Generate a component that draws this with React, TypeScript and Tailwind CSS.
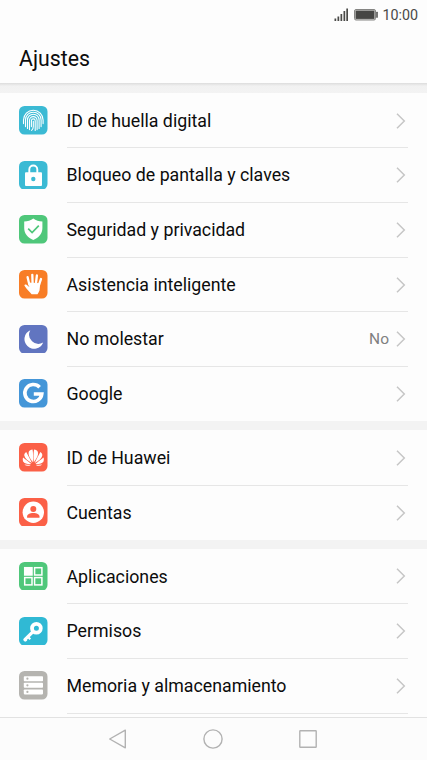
import React from 'react';

interface SettingItem {
  label: string;
  color: string;
  icon: React.ReactNode;
  value?: string;
}

const FingerprintIcon = () => (
  <g fill="none" stroke="white" strokeWidth="1.1" strokeLinecap="round">
    <path d="M4.5 17.6V14a9.8 9.8 0 0 1 19.6 0v3.6" />
    <path d="M6.5 20.6V14a7.8 7.8 0 0 1 15.6 0v6.6" />
    <path d="M8.5 22.4V14a5.8 5.8 0 0 1 11.600 0v8.4" />
    <path d="M10.5 23.6V14.4a3.8 3.8 0 0 1 7.6 0V23.6" />
    <path d="M12.4 20.6V14.8a1.9 1.9 0 0 1 3.8 0V24.4" />
    <path d="M14.3 15.2v5.4q0 2.6-1.7 3.8" />
  </g>
);

const LockIcon = () => (
  <>
    <path d="M10.3 12V8.5a4 4 0 0 1 8 0V12" fill="none" stroke="white" strokeWidth="1.9" />
    <rect x="6" y="11.2" width="17" height="13.9" rx="1" fill="white" />
    <circle cx="14.3" cy="18" r="2.2" fill="#3bbad4" />
  </>
);

const ShieldIcon = () => (
  <>
    <path d="M14.3 3.500C16.8 5.5 20 6.4 23.4 6.600V13c0 5.600-3.700 9.900-9.100 11.900C8.900 22.900 5.200 18.600 5.200 13V6.600C8.600 6.400 11.800 5.500 14.300 3.500Z" fill="white" />
    <path d="M9.200 13.700l3.900 3.900 6.700-6.900" fill="none" stroke="#4fc77a" strokeWidth="1.700" />
  </>
);

const HandIcon = () => (
  <>
    <path d="M10.300 14.500L8.600 7.200M13.600 13L13.300 4.800M17 13L17.900 5.500M19.900 15L22 9" stroke="white" strokeWidth="2.300" strokeLinecap="round" />
    <path d="M9.100 12.500L21.300 13.200L20.500 20.500Q19.400 23 18.500 24.300H12.600C11 22.500 7.500 18.900 5.500 15.800C5 14.700 6.400 13.900 7.500 14.700L10.300 17Z" fill="white" />
  </>
);

const MoonIcon = () => (
  <path d="M11.300 5.200A9.700 9.700 0 1 0 24.200 17.600A9.300 9.300 0 0 1 11.300 5.200Z" fill="white" />
);

const GoogleIcon = () => (
  <path d="M20.600 8.200A8.500 8.500 0 1 0 22.800 15H14.800" fill="none" stroke="white" strokeWidth="3.600" />
);

const HuaweiIcon = () => (
  <g fill="white">
    <path d="M13.800 19.200C10.600 15.500 9 11.700 9.700 9.100C10.200 7.400 11.900 6.500 13.500 6.400C14.200 9.500 14.300 15.300 13.800 19.200Z" />
    <path d="M12.900 20C8.600 17.800 5.800 15.200 5.300 12.500C5.100 10.900 6 9.800 7.200 8.900C8.600 11.600 11.100 16.100 12.900 20Z" />
    <path d="M12.200 21.100C8.500 21.300 5.400 20.400 4.200 18.400C3.500 17 3.700 15.400 4.100 14.500C6.300 16.100 9.500 18.800 12.200 21.100Z" />
    <path d="M11.800 22C9.300 23.300 7 23 5.400 21.600Z" />
    <path d="M14.800 19.200C18 15.500 19.600 11.700 18.900 9.100C18.400 7.400 16.700 6.500 15.100 6.400C14.400 9.500 14.300 15.300 14.800 19.200Z" />
    <path d="M15.700 20C20 17.800 22.800 15.200 23.300 12.500C23.500 10.900 22.600 9.800 21.400 8.900C20 11.600 17.500 16.100 15.700 20Z" />
    <path d="M16.400 21.100C20.100 21.300 23.200 20.400 24.400 18.400C25.100 17 24.900 15.400 24.500 14.500C22.300 16.100 19.100 18.800 16.400 21.100Z" />
    <path d="M16.800 22C19.300 23.300 21.600 23 23.200 21.600Z" />
  </g>
);

const AccountIcon = () => (
  <>
    <circle cx="14.3" cy="14.3" r="10.7" fill="white" />
    <circle cx="14.3" cy="11" r="3" fill="#fb6047" />
    <path d="M8.100 19.800V18.600C8.100 16.200 10.800 15 14.300 15S20.500 16.200 20.500 18.600V19.800Z" fill="#fb6047" />
  </>
);

const AppsIcon = () => (
  <g stroke="white" strokeWidth="1.5" fill="none">
    <rect x="5.7" y="5.700" width="7.3" height="7.3" fill="white" />
    <rect x="15.6" y="5.700" width="7.300" height="7.300" />
    <rect x="5.7" y="15.600" width="7.300" height="7.300" />
    <rect x="15.6" y="15.600" width="7.300" height="7.300" />
  </g>
);

const KeyIcon = () => (
  <g fill="none" stroke="white">
    <circle cx="17.4" cy="11.2" r="4.400" strokeWidth="3.800" />
    <path d="M13.800 14.800L5.900 22.700" strokeWidth="3.200" strokeLinecap="round" />
    <path d="M9.300 20.300L11.300 22.300M6 22.500L7.500 24" strokeWidth="2.200" />
  </g>
);

const StorageIcon = () => (
  <>
    {[5.2, 11.8, 18.4].map(y => (
      <g key={y}>
        <rect x="4.8" y={y} width="19.2" height="5" rx="0.8" fill="white" />
        <circle cx="8.4" cy={y + 2.5} r="1.1" fill="#b5b4b0" />
      </g>
    ))}
  </>
);

const groups: SettingItem[][] = [
  [
    { label: 'ID de huella digital', color: '#3bbad4', icon: <FingerprintIcon /> },
    { label: 'Bloqueo de pantalla y claves', color: '#3bbad4', icon: <LockIcon /> },
    { label: 'Seguridad y privacidad', color: '#4fc77a', icon: <ShieldIcon /> },
    { label: 'Asistencia inteligente', color: '#f87d26', icon: <HandIcon /> },
    { label: 'No molestar', color: '#6175c0', icon: <MoonIcon />, value: 'No' },
    { label: 'Google', color: '#4496d8', icon: <GoogleIcon /> },
  ],
  [
    { label: 'ID de Huawei', color: '#fb6047', icon: <HuaweiIcon /> },
    { label: 'Cuentas', color: '#fb6047', icon: <AccountIcon /> },
  ],
  [
    { label: 'Aplicaciones', color: '#4fc77a', icon: <AppsIcon /> },
    { label: 'Permisos', color: '#30b9d4', icon: <KeyIcon /> },
    { label: 'Memoria y almacenamiento', color: '#b5b4b0', icon: <StorageIcon /> },
  ],
];

const StatusBar = () => (
  <div className="flex h-[30px] shrink-0 items-center justify-end pr-[9px] text-[#4a4a48]">
    <svg className="h-[14px] w-[15px]" viewBox="0 0 15 14" fill="currentColor">
      <rect x="0.5" y="10.5" width="1.7" height="2.5" />
      <rect x="3.5" y="8.5" width="1.7" height="4.5" />
      <rect x="6.5" y="6" width="1.7" height="7" />
      <rect x="9.5" y="3" width="1.7" height="10" />
      <rect x="12.3" y="0.5" width="1.7" height="12.5" />
    </svg>
    <svg className="mr-[4px] ml-[5px] h-3 w-6" viewBox="0 0 24 12">
      <rect x="0.5" y="0.5" width="21" height="10.5" rx="1.5" fill="#d4d4d2" stroke="#858583" />
      <rect x="1.6" y="1.6" width="18.8" height="8.3" fill="#464644" />
      <rect x="22.2" y="2.8" width="1.6" height="6" rx="0.5" fill="#555553" />
    </svg>
    <span className="text-[14.3px] leading-none">10:00</span>
  </div>
);

const SettingRow = ({ item, last }: { item: SettingItem; last: boolean }) => (
  <li className="flex h-[54.67px] items-center pl-[19px]">
    <svg className="h-[28.5px] w-[28.5px] shrink-0" viewBox="0 0 28.5 28.5">
      <rect width="28.5" height="28.5" rx="5.5" fill={item.color} />
      {item.icon}
    </svg>
    <div
      className={`mt-[1.6px] mr-[19px] ml-[19px] flex h-[54.67px] flex-1 items-center border-b ${
        last ? 'border-transparent' : 'border-[#e6e6e6]'
      }`}
    >
      <span className="flex-1 pt-px text-[17.76px] text-[#0c0c0c]">{item.label}</span>
      {item.value && <span className="mr-[7px] pt-px text-[15.5px] text-[#808080]">{item.value}</span>}
      <svg className="mr-[2px] h-4 w-[10px]" viewBox="0 0 10 16" fill="none" stroke="#c6c6c6" strokeWidth="1.5">
        <path d="M1 0.8L8.3 8L1 15.2" />
      </svg>
    </div>
  </li>
);

const NavBar = () => (
  <nav className="flex h-[43px] shrink-0 items-center justify-center gap-[75px] border-t border-[#e2e2e2] bg-[#fcfcfc] pr-px pb-px">
    <svg className="h-5 w-5" viewBox="0 0 20 20" fill="none" stroke="#b2b2b2" strokeWidth="1.4">
      <path d="M1.7 10L17.300 1.200V18.800Z" strokeLinejoin="round" />
    </svg>
    <svg className="h-5 w-5" viewBox="0 0 20 20" fill="none" stroke="#b2b2b2" strokeWidth="1.4">
      <circle cx="10" cy="10" r="9.1" />
    </svg>
    <svg className="h-5 w-5" viewBox="0 0 20 20" fill="none" stroke="#b2b2b2" strokeWidth="1.4">
      <rect x="1.8" y="1.8" width="16.4" height="16.4" rx="0.5" />
    </svg>
  </nav>
);

export default function App() {
  return (
    <div className="flex h-[760px] w-[427px] flex-col overflow-hidden bg-[#fdfdfd] font-[Roboto,sans-serif]">
      <StatusBar />
      <header className="flex h-[53px] shrink-0 items-center pt-[5px] pl-[19px]">
        <h1 className="text-[21.3px] text-[#0c0c0c]">Ajustes</h1>
      </header>
      <main className="min-h-0 flex-1 overflow-hidden bg-[#f3f3f3]">
        <div className="h-[10px] bg-linear-to-b from-[#dcdcdc] via-[#f1f1f1] via-30% to-[#f3f3f3]" />
        <div className="flex flex-col gap-[9.3px]">
          {groups.map((items, g) => (
            <ul key={g} className="bg-[#fdfdfd]">
              {items.map((item, i) => (
                <SettingRow
                  key={item.label}
                  item={item}
                  last={g < groups.length - 1 && i === items.length - 1}
                />
              ))}
              {g === groups.length - 1 && <li className="h-5" />}
            </ul>
          ))}
        </div>
      </main>
      <NavBar />
    </div>
  );
}
